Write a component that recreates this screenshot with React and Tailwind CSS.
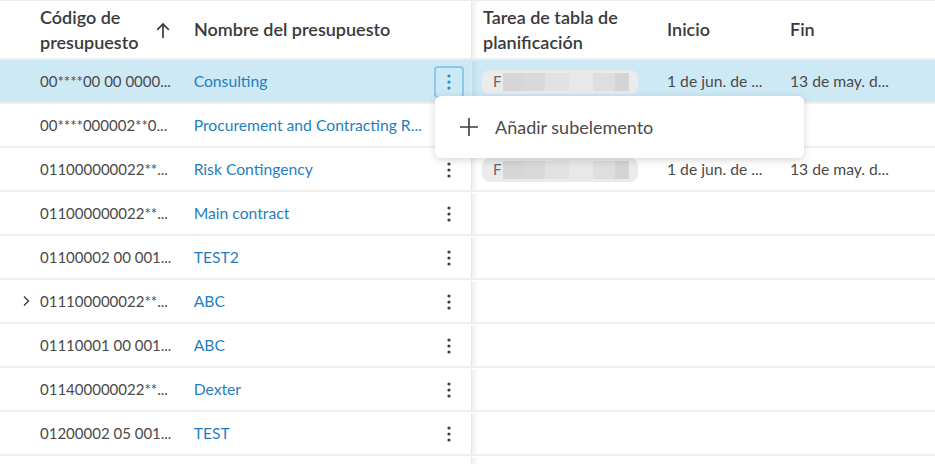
import React from "react";

const rows = [
  { code: "00****00 00 0000...", name: "Consulting", selected: true, chip: true },
  { code: "00****000002**0...", name: "Procurement and Contracting R..." },
  { code: "011000000022**...", name: "Risk Contingency", chip: true },
  { code: "011000000022**...", name: "Main contract" },
  { code: "01100002 00 001...", name: "TEST2" },
  { code: "011100000022**...", name: "ABC", chevron: true },
  { code: "01110001 00 001...", name: "ABC" },
  { code: "011400000022**...", name: "Dexter" },
  { code: "01200002 05 001...", name: "TEST" },
  { code: "", name: "" },
];

function Kebab({ active }) {
  const c = active ? "#1b8fd1" : "#3c3c3c";
  return (
    <svg width="4" height="16" viewBox="0 0 4 16">
      <circle cx="2" cy="2" r="1.6" fill={c} />
      <circle cx="2" cy="8" r="1.6" fill={c} />
      <circle cx="2" cy="14" r="1.6" fill={c} />
    </svg>
  );
}

function Chip() {
  return (
    <div className="flex h-[24px] w-[156px] items-center rounded-[8px] bg-[#ebebeb] pl-[11px] pr-[8px]">
      <span className="text-[15px] text-[#666]">F</span>
      <div className="ml-[2px] flex h-[18px] flex-1">
        <div className="w-[20px] bg-[#d6d6d6]" />
        <div className="w-[22px] bg-[#d9d9d9]" />
        <div className="w-[24px] bg-[#e2e2e2]" />
        <div className="w-[24px] bg-[#e8e8e8]" />
        <div className="w-[22px] bg-[#dedede]" />
        <div className="w-[14px] bg-[#d4d4d4]" />
      </div>
    </div>
  );
}

export default function App() {
  return (
    <div
      className="relative h-[464px] w-[935px] overflow-hidden bg-white text-[#3c3c3c]"
      style={{ fontFamily: "Lato, 'Noto Sans', sans-serif" }}
    >
      <div className="border-t border-[#ececec]">
        {/* header */}
        <div className="flex h-[59px] border-b-2 border-[#ececec]">
          <div className="flex w-[472px] shrink-0 items-center border-r border-[#e6e6e6]">
            <div className="flex w-[194px] shrink-0 items-center pl-[40px] text-[18px] font-semibold leading-[25px] text-[#3a3a3a]">
              <span className="w-[116px] shrink-0">Código de presupuesto</span>
              <svg width="14" height="17" viewBox="0 0 14 17" className="mt-[1px] shrink-0">
                <path d="M7 16V2M1.2 7.8L7 2l5.8 5.8" fill="none" stroke="#3a3a3a" strokeWidth="1.7" />
              </svg>
            </div>
            <div className="text-[18px] font-semibold text-[#3a3a3a]">Nombre del presupuesto</div>
          </div>
          <div className="flex flex-1 items-center shadow-[inset_7px_0_6px_-5px_rgba(0,0,0,0.08)]">
            <div className="w-[195px] pl-[11px] text-[18px] font-semibold leading-[25px] text-[#3a3a3a]">
              Tarea de tabla de planificación
            </div>
            <div className="w-[123px] text-[18px] font-semibold text-[#3a3a3a]">Inicio</div>
            <div className="text-[18px] font-semibold text-[#3a3a3a]">Fin</div>
          </div>
        </div>
        {/* rows */}
        {rows.map((r, i) => (
          <div
            key={i}
            className={`flex h-[44px] border-b-2 border-[#efefef] pt-[1px] ${r.selected ? "bg-[#cde9f6]" : "bg-white"}`}
          >
            <div className="flex w-[472px] shrink-0 items-center border-r border-[#e6e6e6]">
              <div className="relative w-[194px] pl-[40px] text-[15px] text-[#4a4a4a]">
                {r.chevron && (
                  <svg width="8" height="12" viewBox="0 0 8 12" className="absolute left-[22px] top-[5px]">
                    <path d="M2 1.5L6.5 6 2 10.5" fill="none" stroke="#3c3c3c" strokeWidth="1.4" />
                  </svg>
                )}
                {r.code}
              </div>
              <div className="w-[234px] truncate text-[15.7px] text-[#1f7fc0]">{r.name}</div>
              {r.code && (
                <div className="flex w-[44px] justify-center">
                  {r.selected ? (
                    <div className="flex h-[32px] w-[30px] items-center justify-center rounded-[4px] border-2 border-[#8cc8ea]">
                      <Kebab active />
                    </div>
                  ) : (
                    <Kebab />
                  )}
                </div>
              )}
            </div>
            <div className="flex flex-1 items-center shadow-[inset_7px_0_6px_-5px_rgba(0,0,0,0.08)]">
              <div className="w-[195px] pl-[10px]">{r.chip && <Chip />}</div>
              {r.chip && (
                <>
                  <div className="w-[123px] text-[15.7px] text-[#4a4a4a]">1 de jun. de ...</div>
                  <div className="text-[15.7px] text-[#4a4a4a]">13 de may. d...</div>
                </>
              )}
            </div>
          </div>
        ))}
      </div>
      {/* menu */}
      <div className="absolute left-[435px] top-[96px] flex h-[62px] w-[369px] items-center rounded-[6px] bg-white shadow-[0_2px_8px_rgba(0,0,0,0.16)]">
        <svg width="20" height="20" viewBox="0 0 20 20" className="ml-[24px]">
          <path d="M10 1v18M1 10h18" stroke="#3c3c3c" strokeWidth="1.6" />
        </svg>
        <span className="ml-[16px] text-[18px] text-[#4a4a4a]">Añadir subelemento</span>
      </div>
    </div>
  );
}
